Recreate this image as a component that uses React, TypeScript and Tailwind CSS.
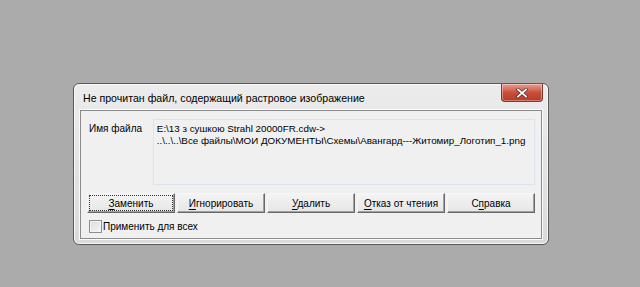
import React from "react";

const font = { fontFamily: "'Liberation Sans', Arial, sans-serif" };

function Btn({ label, u, focus }: { label: string; u: number; focus?: boolean }) {
  const pre = label.slice(0, u);
  const ch = label.slice(u, u + 1);
  const post = label.slice(u + 1);
  return (
    <div className="w-[88px] h-[20px] border border-t-[#f7f7f7] border-l-[#f7f7f7] border-r-[#696969] border-b-[#696969] bg-gradient-to-b from-[#f4f4f4] to-[#e6e6e6] p-[2px] shadow-[inset_-1px_-1px_0_#a0a0a0]">
      <div className={`w-full h-full flex items-center justify-center text-[10px] text-black whitespace-nowrap ${focus ? "outline outline-1 outline-dotted outline-[#333]" : ""}`}>
        <span>
          {pre}
          <span className="underline underline-offset-2">{ch}</span>
          {post}
        </span>
      </div>
    </div>
  );
}

export default function App() {
  return (
    <div className="w-[640px] h-[287px] bg-[#ababab] pl-[73px] pt-[83px]" style={font}>
      <div className="w-[476px] h-[162px] rounded-[6px] border border-[#5a5a5a] bg-gradient-to-b from-[#ececec] to-[#dadada] shadow-[inset_0_0_0_1px_#f8f8f8] flex flex-col px-[6px] pb-[5px]">
        <div className="h-[26px] flex items-start justify-between">
          <div className="text-[10.6px] leading-[14px] text-black pl-[3px] pt-[7px] whitespace-nowrap">Не прочитан файл, содержащий растровое изображение</div>
          <div className="w-[42px] h-[18px] mr-[-1px] rounded-b-[4px] border border-t-0 border-[#7a3a33] bg-gradient-to-b from-[#e8a093] via-[#c9503c] to-[#b83a26] flex items-center justify-center shadow-[inset_0_0_0_1px_rgba(255,255,255,0.35)]">
            <svg width="12" height="10" viewBox="0 0 12 10">
              <path d="M2 1.5 L10 8.5 M10 1.5 L2 8.5" stroke="#5a2a22" strokeWidth="3.2" strokeLinecap="square" />
              <path d="M2 1.5 L10 8.5 M10 1.5 L2 8.5" stroke="#ffffff" strokeWidth="1.8" strokeLinecap="square" />
            </svg>
          </div>
        </div>
        <div className="flex-1 border border-[#8c8c8c] bg-[#f0f0f0] shadow-[0_0_0_1px_#fafafa] flex flex-col pl-[6px] pr-[6px] pt-[8px]">
          <div className="flex">
            <div className="w-[66px] pl-[2px] pt-[3px] text-[10px] leading-[13px] text-black whitespace-nowrap">Имя файла</div>
            <div className="w-[383px] h-[66px] border border-[#dde3ea] bg-[#f0f0f0] pl-[3px] pt-[3px] text-[9.8px] leading-[12px] text-black whitespace-nowrap">
              <div>E:\13 з сушкою Strahl 20000FR.cdw-&gt;</div>
              <div>..\..\..\Все файлы\МОИ ДОКУМЕНТЫ\Схемы\Авангард---Житомир_Логотип_1.png</div>
            </div>
          </div>
          <div className="flex gap-[2px] mt-[8px]">
            <Btn label="Заменить" u={0} focus />
            <Btn label="Игнорировать" u={0} />
            <Btn label="Удалить" u={0} />
            <Btn label="Отказ от чтения" u={0} />
            <Btn label="Справка" u={1} />
          </div>
          <div className="flex items-center mt-[6px] pl-[2px]">
            <div className="w-[13px] h-[13px] border border-[#8e8f8f] bg-gradient-to-br from-[#dcdcdc] to-[#f6f6f6] shadow-[inset_0_0_0_1px_#f4f4f4]" />
            <div className="text-[10px] text-black ml-[1px] whitespace-nowrap">Применить для всех</div>
          </div>
        </div>
      </div>
    </div>
  );
}
